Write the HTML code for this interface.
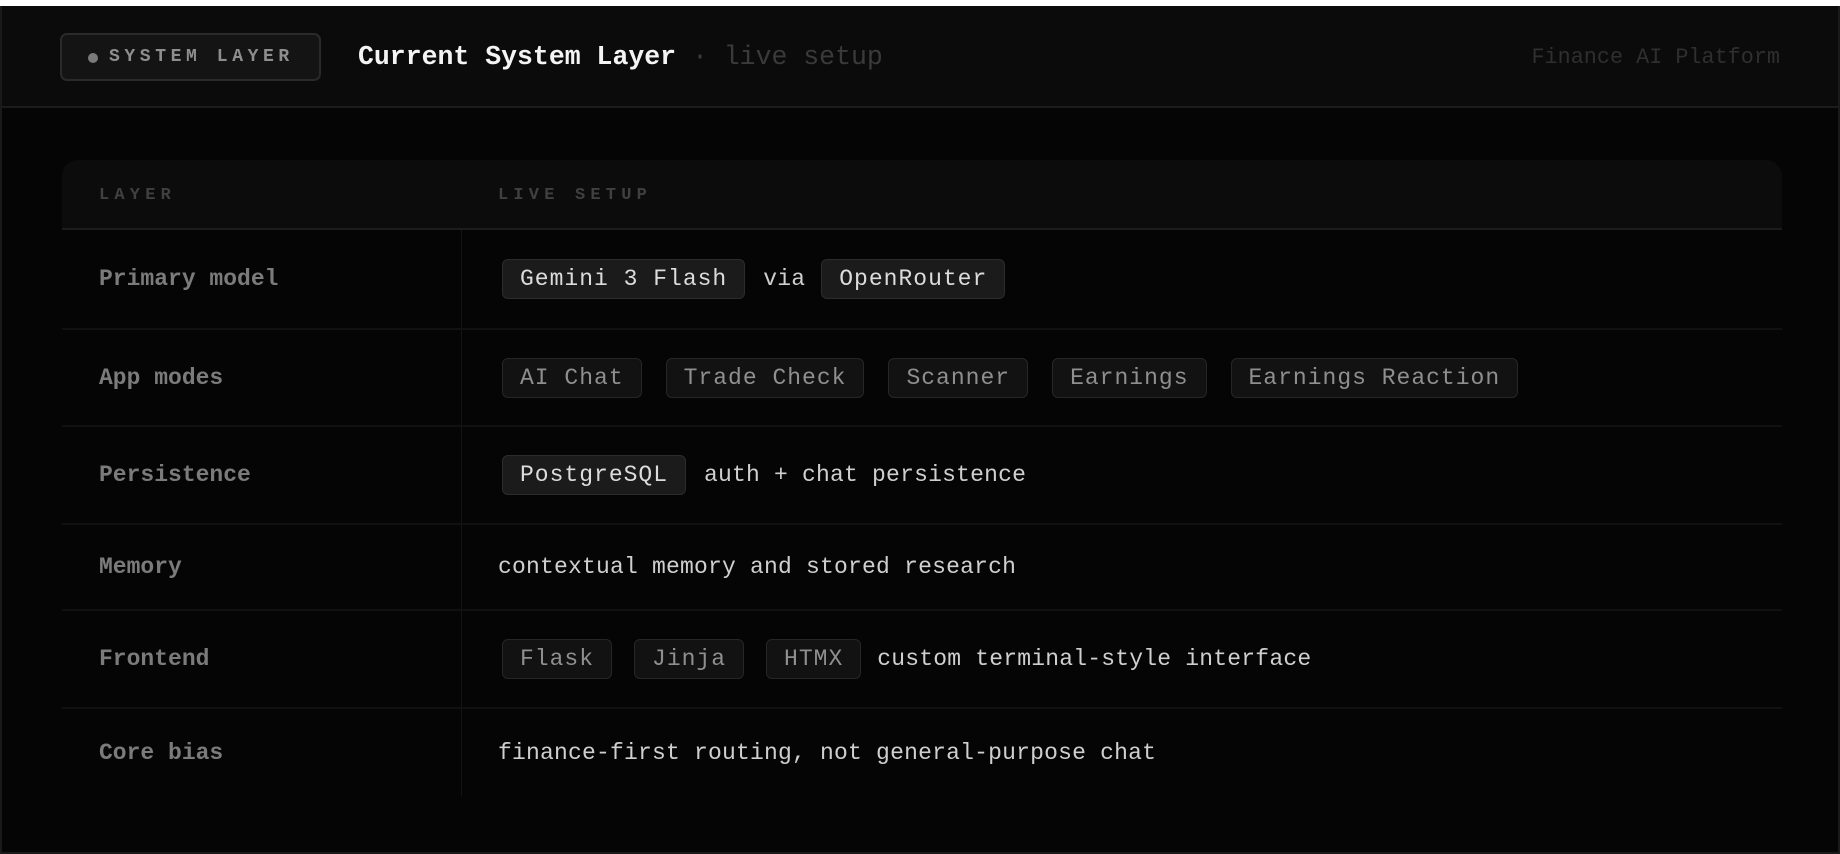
<!DOCTYPE html>
<html><head><meta charset="utf-8">
<style>
*{margin:0;padding:0;box-sizing:border-box}
html,body{width:1840px;height:854px;background:#fff;overflow:hidden}
body{font-family:"Liberation Mono",monospace;position:relative}
.frame{position:absolute;left:0;top:6px;width:1840px;height:848px;background:#050505;border:2px solid #1a1a1a;border-top:none}
.hdr{position:absolute;left:0;top:0;width:100%;height:102px;background:#0b0b0b;border-bottom:2px solid #1c1c1c}
.pill{position:absolute;left:58px;top:27px;width:261px;height:48px;border:2px solid #2a2a2a;border-radius:7px;background:#141414}
.dot{position:absolute;left:26px;top:18px;width:10px;height:10px;border-radius:50%;background:#7a7a7a}
.pill span{position:absolute;left:47px;top:11px;font-size:18px;font-weight:bold;letter-spacing:4.6px;color:#8e8e8e;line-height:22px}
.title{position:absolute;left:356px;top:35px;font-size:26.5px;line-height:32px;font-weight:bold;color:#f4f4f4;white-space:nowrap}
.title .s{color:#3a3a3a;font-weight:normal}
.brand{position:absolute;right:58px;top:40px;font-size:21.8px;line-height:24px;color:#2f2f2f;white-space:nowrap}
.card{position:absolute;left:60px;top:154px;width:1720px;height:636px}
.thead{position:absolute;left:0;top:0;width:1720px;height:70px;background:#0c0c0c;border-radius:16px 16px 0 0;border-bottom:2px solid #1c1c1c}
.th{position:absolute;top:26px;font-size:17px;font-weight:bold;letter-spacing:5.2px;color:#404040;line-height:20px}
.vline{position:absolute;left:399px;top:70px;width:1px;height:566px;background:#141414}
.row{position:absolute;left:0;width:1720px;border-bottom:2px solid #111}
.lab{position:absolute;left:37px;font-size:23px;color:#7b7b7b;font-weight:bold;line-height:28px;white-space:nowrap;transform:translateY(-50%);top:50%}
.val{position:absolute;left:436px;top:50%;transform:translateY(-50%);display:flex;align-items:center;font-size:23px;color:#cfcfcf;white-space:nowrap;letter-spacing:0.2px}
.chip{display:inline-block;height:40px;line-height:38px;padding:0 17px;border:1.5px solid #2c2c2c;border-radius:6px;background:#1b1b1b;color:#dcdcdc;letter-spacing:1px}
.chip.g{background:#121212;color:#8f8f8f;border-color:#262626}
</style></head><body>
<div class="frame">
  <div class="hdr">
    <div class="pill"><div class="dot"></div><span>SYSTEM LAYER</span></div>
    <div class="title">Current System Layer<span class="s"> · live setup</span></div>
    <div class="brand">Finance AI Platform</div>
  </div>
  <div class="card">
    <div class="thead">
      <div class="th" style="left:37px">LAYER</div>
      <div class="th" style="left:436px">LIVE SETUP</div>
    </div>
    <div class="vline"></div>
    <div class="row" style="top:70px;height:100px">
      <div class="lab">Primary model</div>
      <div class="val" style="left:440px"><span class="chip">Gemini 3 Flash</span><span style="margin:0 16px 0 18px">via</span><span class="chip">OpenRouter</span></div>
    </div>
    <div class="row" style="top:170px;height:97px">
      <div class="lab">App modes</div>
      <div class="val" style="left:440px;gap:24px"><span class="chip g">AI Chat</span><span class="chip g">Trade Check</span><span class="chip g">Scanner</span><span class="chip g">Earnings</span><span class="chip g">Earnings Reaction</span></div>
    </div>
    <div class="row" style="top:267px;height:98px">
      <div class="lab">Persistence</div>
      <div class="val" style="left:440px"><span class="chip">PostgreSQL</span><span style="margin-left:18px">auth + chat persistence</span></div>
    </div>
    <div class="row" style="top:365px;height:86px">
      <div class="lab">Memory</div>
      <div class="val">contextual memory and stored research</div>
    </div>
    <div class="row" style="top:451px;height:98px">
      <div class="lab">Frontend</div>
      <div class="val" style="left:440px;gap:22px"><span class="chip g">Flask</span><span class="chip g">Jinja</span><span class="chip g">HTMX</span><span style="margin-left:-6px">custom terminal-style interface</span></div>
    </div>
    <div class="row" style="top:549px;height:87px;border-bottom:none">
      <div class="lab">Core bias</div>
      <div class="val">finance-first routing, not general-purpose chat</div>
    </div>
  </div>
</div>
</body></html>
